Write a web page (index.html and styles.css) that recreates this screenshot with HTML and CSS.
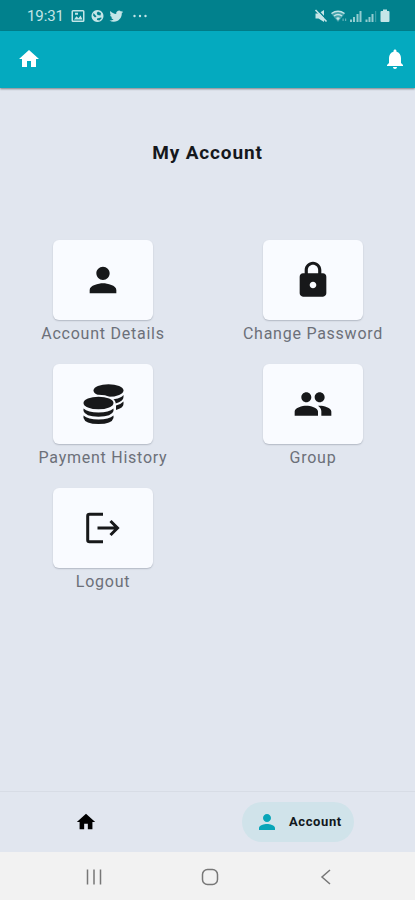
FILE: index.html
```html
<!DOCTYPE html>
<html lang="en">
<head>
<meta charset="utf-8">
<title>My Account</title>
<link rel="stylesheet" href="styles.css">
</head>
<body>
<div class="status">
  <span class="time">19:31</span>
  <svg class="s-left" width="78" height="16" viewBox="0 0 78 16">
    <path fill-rule="evenodd" d="M2 2h10q1.500 0 1.500 1.500v9q0 1.500-1.500 1.500H2Q.5 14 .5 12.500v-9Q.5 2 2 2zM2 3.500v9h10v-9zM3 11.500l2.500-3.300 2 2 2-2.700 2 4zM4 4.700h3v2H4z"/>
    <path fill-rule="evenodd" d="M26.500 2a6 6 0 1 1-.01 0zM22.500 5l3 3.500-1.500 1-1.900-2zM27 3.500l3 1.500-.5 2.500-3-.5-.8-2zM26 10.500l4-1 .8.500-2.300 2.500-2.500-.5z"/>
    <path transform="translate(38.500 1.300) scale(.57)" d="M23.950 4.570a10 10 0 0 1-2.820.77 4.960 4.960 0 0 0 2.160-2.720c-.95.550-2 .950-3.130 1.180a4.920 4.920 0 0 0-8.380 4.480C7.690 8.090 4.070 6.130 1.640 3.160a4.820 4.820 0 0 0-.67 2.480c0 1.710.87 3.210 2.190 4.100a4.900 4.900 0 0 1-2.230-.62v.06a4.920 4.920 0 0 0 3.950 4.830 5 5 0 0 1-2.210.08 4.940 4.940 0 0 0 4.600 3.420A9.870 9.870 0 0 1 0 19.540a14 14 0 0 0 7.550 2.210c9.050 0 14-7.500 14-13.980l-.02-.64a9.900 9.900 0 0 0 2.420-2.560z"/>
    <circle cx="63.500" cy="8" r="1.200"/><circle cx="69" cy="8" r="1.200"/><circle cx="74.500" cy="8" r="1.200"/>
  </svg>
  <svg class="s-right" width="78" height="16" viewBox="0 0 78 16">
    <path d="M1.500 5.500h3L10 2v12l-5.500-3.500h-3z"/>
    <path d="M3 1.500l11 11.500" fill="none" stroke="#01818d" stroke-width="1.500"/>
    <path d="M1.500 2l11 11.500" fill="none" stroke="#c4e5e7" stroke-width="1.600"/>
    <path d="M17 5.500Q24 .5 31 5.500L24 14z" opacity=".35"/>
    <path d="M17.500 5.500q6.500-4.500 13 0M20 8q4-3 8 0" fill="none" stroke="#c4e5e7" stroke-width="1.500"/>
    <path d="M22 10q2-1.500 4 0l-2 2.500z"/>
    <path d="M28.500 10.500h1.200V13h-1.200zM31 10.500h1.200V13H31z" opacity=".5"/>
    <path d="M36 11.500h2V14h-2zM39 9h2v5h-2zM42.500 6h2v8h-2zM45.500 3h2v11h-2z" opacity=".75"/>
    <path d="M51.500 11.500h2V14h-2zM54.500 9h2v5h-2zM57.500 6h2v8h-2z" opacity=".75"/>
    <path d="M61 3h1.200v11H61z" opacity=".3"/>
    <path d="M69 1.500h4V3h1.500q1 0 1 1v9q0 1-1 1h-7q-1 0-1-1V4q0-1 1-1H69z"/>
  </svg>
</div>
<header class="appbar">
  <svg width="24" height="24" viewBox="0 0 24 24"><path d="M10 20v-6h4v6h5v-8h3L12 3 2 12h3v8z"/></svg>
  <svg width="24" height="24" viewBox="0 0 24 24"><path d="M12 22c1.100 0 2-.9 2-2h-4c0 1.100.89 2 2 2zm6-6v-5c0-3.070-1.640-5.640-4.500-6.320V4c0-.83-.67-1.500-1.500-1.500s-1.500.67-1.500 1.500v.68C7.630 5.360 6 7.920 6 11v5l-2 2v1h16v-1l-2-2z"/></svg>
</header>
<main>
  <h1>My Account</h1>
  <div class="grid">
    <div class="item">
      <div class="card"><svg width="40" height="40" viewBox="0 0 24 24"><path d="M12 12c2.210 0 4-1.790 4-4s-1.790-4-4-4-4 1.790-4 4 1.790 4 4 4zm0 2c-2.670 0-8 1.340-8 4v2h16v-2c0-2.660-5.330-4-8-4z"/></svg></div>
      <span class="label">Account Details</span>
    </div>
    <div class="item">
      <div class="card"><svg width="40" height="40" viewBox="0 0 24 24"><path d="M18 8h-1V6c0-2.760-2.240-5-5-5S7 3.240 7 6v2H6c-1.100 0-2 .9-2 2v10c0 1.100.9 2 2 2h12c1.100 0 2-.9 2-2V10c0-1.100-.9-2-2-2zm-6 9c-1.100 0-2-.9-2-2s.9-2 2-2 2 .9 2 2-.9 2-2 2zm3.100-9H8.900V6c0-1.710 1.390-3.100 3.100-3.100s3.100 1.390 3.100 3.100v2z"/></svg></div>
      <span class="label">Change Password</span>
    </div>
    <div class="item">
      <div class="card"><svg width="42" height="42" viewBox="0 0 42 42">
        <ellipse cx="26.500" cy="7.500" rx="15" ry="6.300"/>
        <path d="M33 16q6-1 8.500-4v2q0 4-8 6.500-.5-2-2.500-4zM34 22.500q5-1.200 7.500-4v2.500q0 3.800-7.500 6z"/>
        <ellipse class="gap" cx="16.500" cy="20" rx="17" ry="8.300"/>
        <ellipse cx="16.500" cy="20" rx="15" ry="6.300"/>
        <path d="M1.500 25.500Q6 29.500 16.500 29.500T31.500 25.500V28Q30 33.700 16.500 33.700T1.500 28zM1.500 32.500Q6 36.500 16.500 36.500T31.500 32.500V35Q30 41 16.500 41T1.500 35z"/>
      </svg></div>
      <span class="label">Payment History</span>
    </div>
    <div class="item">
      <div class="card"><svg width="40" height="40" viewBox="0 0 24 24"><path d="M16 11c1.660 0 2.990-1.340 2.990-3S17.660 5 16 5s-3 1.340-3 3 1.340 3 3 3zm-8 0c1.660 0 2.990-1.340 2.990-3S9.660 5 8 5 5 6.340 5 8s1.340 3 3 3zm0 2c-2.330 0-7 1.170-7 3.500V19h14v-2.500c0-2.330-4.670-3.500-7-3.500zm8 0c-.29 0-.62.020-.97.050 1.160.84 1.970 1.970 1.970 3.450V19h6v-2.500c0-2.330-4.670-3.500-7-3.500z"/></svg></div>
      <span class="label">Group</span>
    </div>
    <div class="item">
      <div class="card"><svg class="stroke" width="40" height="40" viewBox="0 0 40 40"><path d="M20 6.200H6.500Q4.700 6.200 4.700 8v24q0 1.800 1.800 1.800H20M14.500 20H34.500M27.500 13l7 7-7 7"/></svg></div>
      <span class="label">Logout</span>
    </div>
  </div>
</main>
<nav class="tabs">
  <svg class="tab-home" width="22" height="22" viewBox="0 0 24 24"><path d="M10 20v-6h4v6h5v-8h3L12 3 2 12h3v8z"/></svg>
  <div class="pill">
    <svg width="24" height="24" viewBox="0 0 24 24"><path d="M12 12c2.210 0 4-1.790 4-4s-1.790-4-4-4-4 1.790-4 4 1.790 4 4 4zm0 2c-2.670 0-8 1.340-8 4v2h16v-2c0-2.660-5.330-4-8-4z"/></svg>
    <span>Account</span>
  </div>
</nav>
<footer class="sysnav">
  <svg width="18" height="18" viewBox="0 0 18 18"><path d="M2.500 1.500v15M9 1.500v15M15.500 1.500v15"/></svg>
  <svg width="18" height="18" viewBox="0 0 18 18"><rect x="1.500" y="1.500" width="15" height="15" rx="5"/></svg>
  <svg width="18" height="18" viewBox="0 0 18 18"><path d="M13 2L5 9l8 7"/></svg>
</footer>
</body>
</html>
```
FILE: styles.css
```css
* { box-sizing: border-box; }
body {
  margin: 0;
  height: 900px;
  display: flex;
  flex-direction: column;
  overflow: hidden;
  background: #e1e6ef;
  font-family: Roboto, sans-serif;
}
svg { display: block; flex: none; }
.status {
  height: 31px;
  padding: 0 23px 0 27px;
  display: flex;
  align-items: center;
  background: #01818d;
  color: #c4e5e7;
  fill: #c4e5e7;
}
.time { width: 44px; font-size: 15px; letter-spacing: -0.1px; }
.s-right { margin-left: auto; }
.appbar {
  height: 57px;
  padding: 0 8px 0 17px;
  display: flex;
  align-items: center;
  justify-content: space-between;
  background: #04aabf;
  fill: #fff;
  box-shadow: 0 1px 2px rgba(0, 0, 0, .45);
}
.appbar svg { margin-top: -1px; }
main { flex: 1; }
h1 {
  margin: 54px 0 0;
  line-height: 22px;
  text-align: center;
  font-size: 19px;
  font-weight: 700;
  letter-spacing: .85px;
  color: #15181c;
}
.grid {
  margin-top: 75.500px;
  display: grid;
  grid-template-columns: 206px 204px;
  grid-auto-rows: 124.400px;
  column-gap: 5px;
}
.item { display: flex; flex-direction: column; align-items: center; }
.card {
  width: 100px;
  height: 80px;
  display: flex;
  align-items: center;
  justify-content: center;
  border-radius: 6px;
  background: #f9fbff;
  fill: #17181a;
  box-shadow: 0 1px 1.500px rgba(60, 70, 85, .28);
}
.gap { fill: #f9fbff; }
.stroke { fill: none; stroke: #17181a; stroke-width: 3; }
.label {
  margin-top: 4px;
  line-height: 20px;
  font-size: 16px;
  letter-spacing: .75px;
  color: #6c7079;
  white-space: nowrap;
}
.tabs {
  height: 61px;
  padding: 0 61px 0 75px;
  display: flex;
  align-items: center;
  justify-content: space-between;
  border-top: 1px solid #d7dce5;
}
.pill {
  width: 112px;
  height: 40px;
  padding-left: 13px;
  display: flex;
  align-items: center;
  gap: 10px;
  border-radius: 20px;
  background: #d0e3ea;
  fill: #08a5b8;
  font-size: 13px;
  font-weight: 700;
  letter-spacing: .6px;
  color: #111820;
}
.pill span { margin-top: -1px; }
.sysnav {
  height: 48px;
  padding: 1px 80px 0 85px;
  display: flex;
  align-items: center;
  justify-content: space-between;
  background: #f2f2f2;
}
.sysnav svg { fill: none; stroke: #777; stroke-width: 1.500; }
```
